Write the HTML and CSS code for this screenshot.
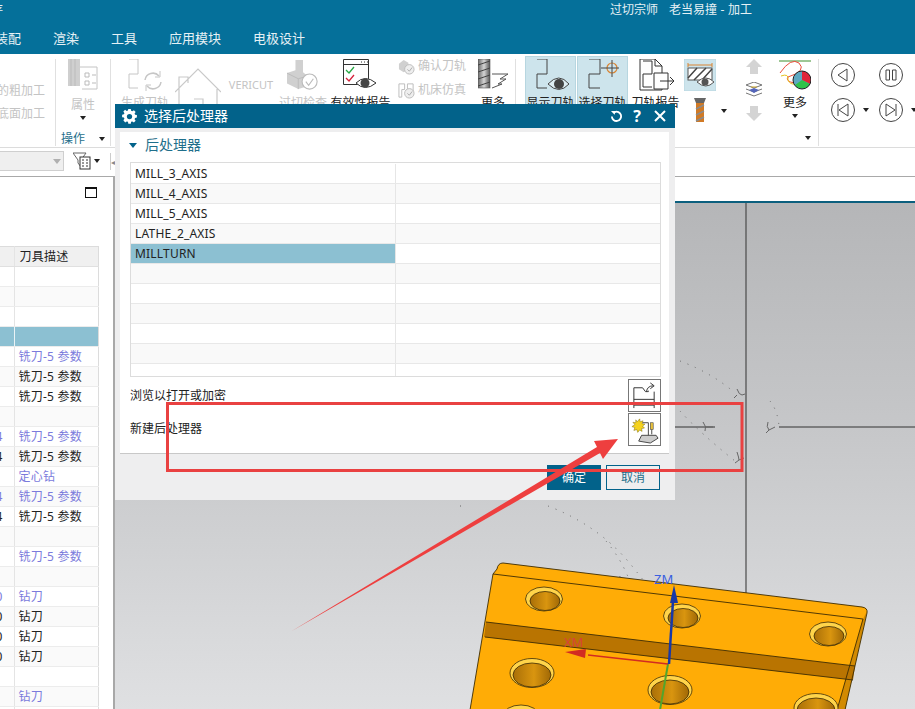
FILE: index.html
```html
<!DOCTYPE html>
<html lang="zh">
<head>
<meta charset="utf-8">
<title>选择后处理器</title>
<link rel="stylesheet" href="styles.css">
</head>
<body>
<div class="app">
  <header class="top">
    <div class="titlerow"><span class="cutword">存</span><span class="apptitle">过切宗师&nbsp;&nbsp;&nbsp;老当易撞 - 加工</span></div>
    <nav class="menu"><span class="m1">装配</span><span class="m2">渲染</span><span class="m3">工具</span><span class="m4">应用模块</span><span class="m5">电极设计</span></nav>
  </header>

  <section class="ribbon">
    <div class="g1">
      <span class="off">的粗加工</span>
      <span class="off">底面加工</span>
    </div>
    <div class="g2">
      <svg class="i32" viewBox="0 0 32 32"><rect x="1" y="0" width="12" height="27" fill="#cfcfcf"/><path d="M4 0v27M8 0v27" stroke="#bbb"/><path d="M13 8h17v22H15" fill="#fff" stroke="#c4c4c4"/><path d="M18 14h4v4h-4zM18 22h4v4h-4zM25 16h4M25 24h4" fill="none" stroke="#bbb"/></svg>
      <span class="lab off">属性</span>
      <i class="caret c-mid"></i>
      <div class="grouplab"><span>操作</span><i class="caret"></i></div>
    </div>
    <div class="g3">
      <div class="tool">
        <svg class="i44" viewBox="0 0 44 32"><path d="M6 0h9v15H6v14h9" fill="none" stroke="#c6c6c6"/><path d="M22 21a8 8 0 0 1 14-4M38 23a8 8 0 0 1-14 4" fill="none" stroke="#c6c6c6" stroke-width="1.5"/><path d="M37 12v6h-5M23 32v-6h5" fill="none" stroke="#c6c6c6"/></svg>
        <span class="lab off">生成刀轨</span>
      </div>
      <div class="tool">
        <svg class="i46" viewBox="0 0 46 40"><path d="M4 24V10h9v6M0 25 23 2l23 23M4 22v18M42 22v18M19 32h9v8" fill="none" stroke="#c9c9c9" stroke-width="1.2"/></svg>
      </div>
      <div class="tool vericut off">VERICUT</div>
      <div class="tool">
        <svg class="i32" viewBox="0 0 34 32"><path d="M9 0h8v13l5 4v11l-10 3-12-6V14l9-3z" fill="#d0d0d0"/><path d="M0 14l12 6 10-3M12 20v11" fill="none" stroke="#bbb"/><circle cx="24" cy="23" r="8" fill="#fff" stroke="#bbb" stroke-width="1.2"/><path d="M20 23l3 4 5-7" fill="none" stroke="#bbb" stroke-width="1.2"/></svg>
        <span class="lab off">过切检查</span>
      </div>
      <div class="tool">
        <svg class="i36" viewBox="0 0 36 32"><path d="M.5.5h25v25H.5zM.5 5.500h25" fill="#fff" stroke="#333"/><path d="M18 3h1M21 3h1M24 3h1" stroke="#333"/><path d="M3 11l3 3 5-6" fill="none" stroke="#27a844" stroke-width="1.300"/><path d="M3 19l3 3 5-6" fill="none" stroke="#d5213a" stroke-width="1.300"/><path d="M13 24q9-9 20 0-11 9-20 0z" fill="#fff" stroke="#333"/><circle cx="22" cy="24" r="4.500" fill="#444"/></svg>
        <span class="lab">有效性报告</span>
      </div>
      <div class="tool smallcol">
        <div class="smallrow">
          <svg class="i17" viewBox="0 0 18 18"><path d="M1 6l5-4 5 3v7l-5 3-5-3z" fill="#d0d0d0"/><circle cx="12" cy="12" r="5" fill="#eee" stroke="#bbb"/><path d="M10 12l2 2 3-4" fill="none" stroke="#aaa"/></svg>
          <span class="off">确认刀轨</span>
        </div>
        <div class="smallrow">
          <svg class="i17" viewBox="0 0 18 18"><path d="M1 2h6v6H4v8H1zM10 2h6v8h-6z" fill="none" stroke="#bbb"/><circle cx="12" cy="12" r="5" fill="#eee" stroke="#bbb"/><path d="M10 12l2 2 3-4" fill="none" stroke="#aaa"/></svg>
          <span class="off">机床仿真</span>
        </div>
      </div>
      <div class="tool more1">
        <svg class="i32" viewBox="0 0 32 32"><defs><linearGradient id="drillg" x1="0" x2="1"><stop offset="0" stop-color="#666"/><stop offset=".5" stop-color="#d5d5d5"/><stop offset="1" stop-color="#555"/></linearGradient></defs><rect x="0" y="0" width="12" height="29" fill="url(#drillg)" stroke="#555" stroke-width=".6"/><path d="M0 6l12-4M0 13l12-4M0 20l12-4M0 27l12-4" stroke="#444"/><path d="M14 15h16l-8 5h6l-8 5h4l-10 4" fill="#fff" stroke="#555"/></svg>
        <span class="lab">更多</span>
      </div>
    </div>
    <div class="g4">
      <div class="tool hl t51">
        <svg class="i44" viewBox="0 0 44 32"><path d="M8 0h10v15H8v14h10" fill="none" stroke="#444"/><path d="M19 25q11-12 21 0-10 11-21 0z" fill="#dfeef3" stroke="#444"/><circle cx="30" cy="25" r="5" fill="#444"/></svg>
        <span class="lab">显示刀轨</span>
      </div>
      <div class="tool hl t51">
        <svg class="i44" viewBox="0 0 44 32"><path d="M8 0h11v15H8v14h11" fill="none" stroke="#444"/><circle cx="31" cy="9" r="5" fill="none" stroke="#d98432" stroke-width="1.200"/><path d="M20 9h18M31 1v17" fill="none" stroke="#444"/></svg>
        <span class="lab">选择刀轨</span>
      </div>
      <div class="tool t45">
        <svg class="i36" viewBox="0 0 36 32"><path d="M2 0h15l7 7v24H2z" fill="#fff" stroke="#333"/><path d="M5 2h9v13H5v13h9M17 0v7h7" fill="none" stroke="#333"/><path d="M16 14h14v16H16z" fill="#fff" stroke="#333"/><path d="M22 22h14M32 18l4 4-4 4" fill="none" stroke="#333"/></svg>
        <span class="lab">刀轨报告</span>
      </div>
    </div>
    <div class="g5">
      <div class="col-a">
        <svg class="tile" viewBox="0 0 32 32"><rect width="32" height="32" fill="#cde4ec" stroke="#b7d6e0"/><path d="M4 6h24M4 4v4M28 4v4" stroke="#d98432" fill="none"/><rect x="4" y="9" width="24" height="12" fill="#fff" stroke="#555"/><path d="M4 19l9-10M10 21 22 9M18 21l10-11" stroke="#444" stroke-width="1.500"/><path d="M13 23q9-8 17 0-8 8-17 0z" fill="#fff" stroke="#555"/><circle cx="21" cy="23" r="3.500" fill="#555"/></svg>
        <div class="toolrow">
          <svg class="mill" viewBox="0 0 12 25"><path d="M0 0h12l-2 5H2z" fill="#666"/><rect x="2" y="5" width="8" height="19" fill="#d17a25"/><path d="M2 11l8-4M2 17l8-4M2 23l8-4" stroke="#8b8b8b" stroke-width="1.500"/></svg>
          <i class="caret c-a"></i>
        </div>
      </div>
      <div class="col-b">
        <svg class="i18" viewBox="0 0 18 16"><path d="M9 0l8 8h-4v7H5V8H1z" fill="#d4d4d4"/></svg>
        <svg class="i18" viewBox="0 0 18 16"><path d="M9 0l8 3-8 3-8-3zM1 7l8 3 8-3M1 11l8 3 8-3" fill="none" stroke="#777"/><path d="M4 8l5 3 5-3-5-2z" fill="#5566bb"/><path d="M6 5h6" stroke="#c9a32a"/></svg>
        <svg class="i18" viewBox="0 0 18 16"><path d="M9 16l8-8h-4V1H5v7H1z" fill="#d4d4d4"/></svg>
      </div>
      <div class="col-c">
        <svg class="i32" viewBox="0 0 32 32"><path d="M0 2h32" stroke="#3c8f2d"/><path d="M1 14Q12-2 20 4 28 12 9 18q-3 4 6 6" fill="none" stroke="#ea4d3d"/><path d="M2 17q8-3 7 4 2 5 8 4" fill="none" stroke="#e7c21f"/><circle cx="23" cy="21" r="9" fill="#5ea8c1"/><path d="M23 21V12a9 9 0 0 1 8 13z" fill="#e0253a"/><path d="M23 21l8 4a9 9 0 0 1-15 1z" fill="#30c24a"/><circle cx="23" cy="21" r="9" fill="none" stroke="#222"/></svg>
        <span class="lab">更多</span>
        <i class="caret c-mid"></i>
        <div class="c-end"><i class="caret"></i></div>
      </div>
    </div>
    <div class="g6">
      <svg class="media" viewBox="0 0 24 24"><circle cx="12" cy="12" r="11.500" fill="none" stroke="#444"/><path d="M16 6v12L7 12z" fill="none" stroke="#444"/></svg>
      <svg class="media" viewBox="0 0 24 24"><circle cx="12" cy="12" r="11.500" fill="none" stroke="#444"/><path d="M7 7h3.500v10H7zM13.500 7H17v10h-3.500z" fill="none" stroke="#444"/></svg>
      <span class="mediawrap"><svg class="media" viewBox="0 0 24 24"><circle cx="12" cy="12" r="11.500" fill="none" stroke="#444"/><path d="M7 6v12M17 6v12L8 12z" fill="none" stroke="#444"/></svg><i class="caret"></i></span>
      <span class="mediawrap"><svg class="media" viewBox="0 0 24 24"><circle cx="12" cy="12" r="11.500" fill="none" stroke="#444"/><path d="M17 6v12M7 6v12l9-6z" fill="none" stroke="#444"/></svg><i class="caret"></i></span>
    </div>
  </section>

  <section class="filterbar">
    <div class="combo"><i class="caret gray"></i></div>
    <svg class="filter" viewBox="0 0 18 18"><path d="M0 1h13L8 8v7L5 11V8z" fill="#fff" stroke="#666"/><rect x="7" y="5" width="10" height="12" fill="#fff" stroke="#333"/><path d="M9 8h2M13 8h2M9 11h2M13 11h2M9 14h2M13 14h2" stroke="#333"/></svg>
    <i class="caret"></i>
    <span class="collapse">◂</span>
  </section>

  <main class="main">
    <aside class="navpanel">
      <div class="navtop"><span class="maxbtn"></span></div>
      <table class="navtable">
        <thead><tr><th></th><th>刀具描述</th></tr></thead>
        <tbody>
          <tr><td></td><td></td></tr>
          <tr><td></td><td></td></tr>
          <tr><td></td><td></td></tr>
          <tr class="sel"><td></td><td></td></tr>
          <tr class="blue"><td></td><td>铣刀-5 参数</td></tr>
          <tr><td></td><td>铣刀-5 参数</td></tr>
          <tr><td></td><td>铣刀-5 参数</td></tr>
          <tr><td></td><td></td></tr>
          <tr class="blue"><td>4</td><td>铣刀-5 参数</td></tr>
          <tr><td>4</td><td>铣刀-5 参数</td></tr>
          <tr class="blue"><td></td><td>定心钻</td></tr>
          <tr class="blue"><td>4</td><td>铣刀-5 参数</td></tr>
          <tr><td>4</td><td>铣刀-5 参数</td></tr>
          <tr><td></td><td></td></tr>
          <tr class="blue"><td></td><td>铣刀-5 参数</td></tr>
          <tr><td></td><td></td></tr>
          <tr class="blue"><td>0</td><td>钻刀</td></tr>
          <tr><td>0</td><td>钻刀</td></tr>
          <tr><td>0</td><td>钻刀</td></tr>
          <tr><td>0</td><td>钻刀</td></tr>
          <tr><td></td><td></td></tr>
          <tr class="blue"><td></td><td>钻刀</td></tr>
          <tr><td></td><td></td></tr>
        </tbody>
      </table>
    </aside>
    <div class="work">
      <div class="strip"></div>
      <div class="viewport">
        <svg class="scene" viewBox="115 202 800 507" preserveAspectRatio="none">
          <defs>
            <linearGradient id="bore" x1="0" x2="1"><stop offset="0" stop-color="#a96f08"/><stop offset=".55" stop-color="#d9950f"/><stop offset="1" stop-color="#a06806"/></linearGradient>
          </defs>
          <path d="M746 202V709" stroke="#4a4a4a" stroke-width="1.200"/>
          <path d="M675 426H715M779 426H915" stroke="#333"/>
          <path d="M680 360Q712 372 735 392M680 410Q700 432 735 460M770 400q8 10 9 26M548 505Q600 525 632 565T660 600M606 540Q640 580 640 640M620 575q-8 40 0 70M510 497h1M460 505h1" fill="none" stroke="#666" stroke-dasharray="1 7"/>
          <path d="M737 388q2 6 5 6l3-1M737 394l-3 3M703 421q4 5 2 9M705 426h8M768 421q-2 5 1 8l6-3M769 429l-3 3M737 451q2 6 2 8l5-2M739 459l-4 3" fill="none" stroke="#666"/>

          <path d="M503 562Q498 562 497 568L493 573 470 709H845L867 612Q868 607 863 606Z" fill="#ffac06"/>
          <path d="M863 618l4-8-22 99h-8z" fill="#d28a02"/>
          <path d="M486 621 855 665 853 679 484 636Z" fill="#b97401"/>
          <path d="M503 562Q498 562 497 568L493 573M503 562 862 606Q868 607 867 612L845 709M493 573 863 618 837 709M493 573 470 709M486 621 855 665M485 636 853 679" fill="none" stroke="#3d2c05" stroke-width=".9"/>
          <g>
            <ellipse cx="544" cy="598" rx="18.500" ry="12" fill="#ffd44a" stroke="#3d2c05" stroke-width=".8"/><ellipse cx="545" cy="600" rx="15" ry="9.500" fill="url(#bore)" stroke="#3d2c05" stroke-width=".8"/>
            <ellipse cx="682" cy="615" rx="18.500" ry="12" fill="#ffd44a" stroke="#3d2c05" stroke-width=".8"/><ellipse cx="683" cy="617" rx="15" ry="9.500" fill="url(#bore)" stroke="#3d2c05" stroke-width=".8"/>
            <ellipse cx="828" cy="633" rx="18.500" ry="12" fill="#ffd44a" stroke="#3d2c05" stroke-width=".8"/><ellipse cx="829" cy="635" rx="15" ry="9.500" fill="url(#bore)" stroke="#3d2c05" stroke-width=".8"/>
            <ellipse cx="532" cy="672" rx="22" ry="14.500" fill="#ffd44a" stroke="#3d2c05" stroke-width=".8"/><ellipse cx="532" cy="674" rx="19" ry="12" fill="url(#bore)" stroke="#3d2c05" stroke-width=".8"/>
            <ellipse cx="670" cy="689" rx="22" ry="14.500" fill="#ffd44a" stroke="#3d2c05" stroke-width=".8"/><ellipse cx="670" cy="691" rx="19" ry="12" fill="url(#bore)" stroke="#3d2c05" stroke-width=".8"/>
            <ellipse cx="816" cy="707" rx="22" ry="14.500" fill="#ffd44a" stroke="#3d2c05" stroke-width=".8"/><ellipse cx="816" cy="709" rx="19" ry="12" fill="url(#bore)" stroke="#3d2c05" stroke-width=".8"/>
            <ellipse cx="521" cy="715" rx="18" ry="11" fill="#ffd44a" stroke="#3d2c05" stroke-width=".8"/>
          </g>
          <path d="M668 663 660 709" stroke="#52a52c" stroke-width="2"/>
          <path d="M668 663 588 654" stroke="#d22b22" stroke-width="1.500"/>
          <path d="M565 651 586 648 585 657Z" fill="#d22b22"/>
          <path d="M669 663 673 600" stroke="#1738a8" stroke-width="2.500"/>
          <path d="M674 584 678 602H670Z" fill="#1738a8"/>
          <text x="654" y="583" class="axis zm">ZM</text>
          <text x="564" y="646" class="axis xm">XM</text>
        </svg>
      </div>
    </div>
  </main>

  <section class="dialog">
    <div class="dlgtitle">
      <svg class="gear" viewBox="0 0 16 16"><path d="M6.500 0h3l.4 2.200 1.500.6 1.900-1.300 2.100 2.100-1.300 1.900.6 1.500 2.200.4v3l-2.200.4-.6 1.500 1.300 1.900-2.100 2.100-1.900-1.300-1.500.6-.4 2.200h-3l-.4-2.200-1.500-.6-1.900 1.300L.5 13.700l1.300-1.900-.6-1.500L-1 9.900v-3l2.200-.4.600-1.500L.5 3.100 2.600 1l1.900 1.300L6 1.700z" transform="translate(1 0) scale(.88)" fill="#fff"/><circle cx="8" cy="8" r="2.800" fill="#02628a"/></svg>
      <span class="dlgname">选择后处理器</span>
      <svg class="reset" viewBox="0 0 14 14"><path d="M5 2.200A5 5 0 1 1 2 7" fill="none" stroke="#fff" stroke-width="2"/><path d="M1 1l5 0-1 4z" fill="#fff"/></svg>
      <span class="help">?</span>
      <svg class="close" viewBox="0 0 12 12"><path d="M1 1l10 10M11 1 1 11" stroke="#fff" stroke-width="2"/></svg>
    </div>
    <div class="panel">
      <div class="sechead"><i class="tri"></i><span>后处理器</span></div>
      <div class="plist">
        <div class="prow"><span>MILL_3_AXIS</span><span></span></div>
        <div class="prow"><span>MILL_4_AXIS</span><span></span></div>
        <div class="prow"><span>MILL_5_AXIS</span><span></span></div>
        <div class="prow"><span>LATHE_2_AXIS</span><span></span></div>
        <div class="prow picked"><span>MILLTURN</span><span></span></div>
        <div class="prow"><span></span><span></span></div>
        <div class="prow"><span></span><span></span></div>
        <div class="prow"><span></span><span></span></div>
        <div class="prow"><span></span><span></span></div>
        <div class="prow"><span></span><span></span></div>
        <div class="prow lastrow"><span></span><span></span></div>
      </div>
      <div class="action act1">
        <span>浏览以打开或加密</span>
        <span class="iconbtn"><svg viewBox="0 0 30 30"><path d="M4 9h9l3 4h3v-1M4 9v21M25 13v17M4 21h21M4 27h21" fill="none" stroke="#333" transform="translate(0 -2)"/><path d="M17 11q1-6 7-6M21 2l4 3-4 3" fill="none" stroke="#333"/></svg></span>
      </div>
      <div class="action act2">
        <span>新建后处理器</span>
        <span class="iconbtn"><svg viewBox="0 0 30 30"><path d="M6 5l1.500 2L10 4l.5 3 3-1-1 3 3 .5-2.500 2 2 2-3 .5.500 3-2.500-1.500L8 18l-1-3-3 1 1-3-3-1 3-2-2-2.500 3 .5z" fill="#f5d21c" stroke="#7a6a10" stroke-width=".5"/><path d="M13 8h6v14" fill="none" stroke="#444"/><rect x="21" y="8" width="3" height="7" fill="#e8c13c" stroke="#444" stroke-width=".6"/><path d="M22.500 15v5" stroke="#444"/><path d="M12 21h15l2 3-8 5-12-2z" fill="#ccc" stroke="#444"/></svg></span>
      </div>
    </div>
    <div class="dlgfoot"><span class="btn primary">确定</span><span class="btn">取消</span></div>
  </section>

  <svg class="notes" viewBox="0 0 915 709">
    <rect x="167.500" y="403.500" width="574.500" height="67" fill="none" stroke="#e94141" stroke-width="3"/>
    <path d="M291 631.500 597 447 594 441 618 439 603 459 600 453Z" fill="#ee3f3f"/>
  </svg>
</div>
</body>
</html>
```

FILE: styles.css
```css
* { box-sizing: border-box; }
html, body { margin: 0; padding: 0; }
body {
  width: 915px;
  height: 709px;
  overflow: hidden;
  background: #fff;
  font: 12px/16px "Noto Sans", "Noto Sans CJK SC", sans-serif;
  color: #222;
}
svg { display: block; flex: none; }
i { font-style: normal; }

.app {
  position: relative;
  width: 915px;
  height: 709px;
  overflow: hidden;
  display: flex;
  flex-direction: column;
}

/* header */
.top {
  height: 54px;
  background: #05709a;
  color: #e6f1f5;
  flex: none;
}
.titlerow {
  height: 22px;
  display: flex;
  justify-content: space-between;
  padding-right: 163px;
  line-height: 20px;
}
.cutword { margin-left: -9px; }
.apptitle { white-space: pre; word-spacing: .5px; }
.menu {
  display: flex;
  height: 32px;
  align-items: center;
  font-size: 13px;
  line-height: 34px;
}
.m1 { margin-left: -5px; width: 58px; }
.m2 { width: 58px; }
.m3 { width: 58px; }
.m4 { width: 84px; }

/* ribbon */
.ribbon {
  height: 94px;
  flex: none;
  display: flex;
  background: #fff;
  border-bottom: 1px solid #dcdcdc;
  padding-top: 2px;
  font-size: 12px;
  overflow: hidden;
}
.ribbon > div { flex: none; }
.off { color: #c4c4c4; }
.caret {
  display: inline-block;
  width: 0;
  height: 0;
  border-left: 3.5px solid transparent;
  border-right: 3.500px solid transparent;
  border-top: 4px solid #222;
}
.caret.gray { border-top-color: #b0b0b0; border-left-width: 4.500px; border-right-width: 4.500px; border-top-width: 5px; }
.g1, .g2, .g3 { border-right: 1px solid #e0e0e0; height: 87px; margin-top: 3px; }
.g1 {
  width: 56px;
  display: flex;
  flex-direction: column;
  align-items: flex-end;
  padding: 24px 10px 0 0;
  gap: 7px;
  overflow: hidden;
  white-space: nowrap;
}
.g2 {
  width: 55px;
  display: flex;
  flex-direction: column;
  align-items: center;
}
.lab { line-height: 16px; white-space: nowrap; margin-top: 4px; display: block; }
.c-mid { margin-top: 3px; }
.grouplab {
  display: flex;
  align-items: center;
  gap: 14px;
  color: #1f6f8b;
  margin-top: 11px;
  height: 18px;
}
.g2 .lab { margin-top: 6px; }
.g3 {
  width: 405px;
  display: grid;
  grid-template-columns: 44px 46px 44px 44px 55px 64px 32px;
  column-gap: 8px;
  padding-left: 12px;
  align-content: start;
}
.tool { display: flex; flex-direction: column; align-items: center; }
.i32 { width: 32px; height: 32px; }
.i36 { width: 36px; height: 32px; }
.i44 { width: 44px; height: 32px; }
.i46 { width: 46px; height: 40px; margin-top: 8px; }
.i17 { width: 17px; height: 17px; }
.i18 { width: 18px; height: 16px; }
.vericut { font-size: 11px; line-height: 16px; margin-top: 18px; white-space: nowrap; }
.smallcol { align-items: flex-start; padding: 0 0 0 2px; margin-top: -5px; }
.smallrow { display: flex; align-items: center; gap: 3px; height: 24px; white-space: nowrap; }
.more1 { margin-left: 10px; align-items: flex-start; }
.more1 .lab { margin-left: 3px; }

.g4 { display: flex; padding-left: 9px; width: 162px; }
.t51 { width: 51px; margin-right: 1px; }
.t45 { width: 45px; margin-left: 4px; margin-top: 3px; }
.hl {
  background: #cde4ec;
  border: 1px solid #b7d6e0;
  height: 90px;
  padding-top: 2px;
}

.g5 { display: flex; width: 141px; height: 87px; margin-top: 3px; border-right: 1px solid #e0e0e0; }
.col-a { width: 67px; padding-left: 6px; }
.tile { width: 32px; height: 32px; }
.toolrow { display: flex; align-items: center; gap: 15px; padding-left: 10px; margin-top: 7px; }
.mill { width: 12px; height: 25px; }
.col-b { width: 18px; display: flex; flex-direction: column; gap: 7px; }
.col-c { width: 32px; margin-left: 16px; display: flex; flex-direction: column; align-items: center; }
.col-c .lab { margin-top: 4px; }
.c-end { width: 32px; text-align: right; margin-top: 14px; height: 8px; line-height: 8px; }

.g6 {
  width: 110px;
  display: grid;
  grid-template-columns: 48px 48px;
  row-gap: 11px;
  padding: 7px 0 0 12px;
  align-content: start;
}
.media { width: 24px; height: 24px; }
.mediawrap { display: flex; align-items: center; gap: 8px; width: 48px; }

/* filter bar */
.filterbar {
  height: 29px;
  flex: none;
  background: #fff;
  border-bottom: 1px solid #a9a9a9;
  display: flex;
  align-items: center;
  padding-bottom: 2px;
}
.combo {
  width: 64px;
  height: 20px;
  background: #efefef;
  border: 1px solid #cfcfcf;
  border-left: 0;
  display: flex;
  align-items: center;
  justify-content: flex-end;
  padding-right: 2px;
}
.filter { width: 18px; height: 18px; margin-left: 9px; }
.filterbar .caret { margin-left: 3px; }
.combo .caret { margin-left: 0; }
.collapse {
  margin-left: 10px;
  font-size: 8px;
  width: 10px;
  height: 17px;
  line-height: 17px;
  color: #888;
  border-left: 1px solid #ccc;
}

/* main */
.main { flex: 1; display: flex; min-height: 0; }
.navpanel {
  width: 115px;
  flex: none;
  background: #fff;
  border-right: 2px solid #a8a8a8;
  overflow: hidden;
}
.navtop { height: 69px; padding: 10px 16px 0 0; display: flex; justify-content: flex-end; }
.maxbtn {
  width: 12px;
  height: 11px;
  border: 1px solid #111;
  border-top-width: 2px;
}
.navtable {
  width: 99px;
  table-layout: fixed;
  border-collapse: collapse;
  border-top: 1px solid #dcdcdc;
  border-right: 1px solid #dcdcdc;
  font-size: 12px;
  letter-spacing: .25px;
}
.navtable th:first-child, .navtable td:first-child {
  width: 14px;
  border-right: 1px solid #e4e4e4;
  text-align: right;
  padding: 0 11px 0 0;
  overflow: hidden;
  direction: rtl;
}
.navtable th {
  height: 20px;
  background: #f0f0f0;
  font-weight: 400;
  text-align: left;
  padding: 0 0 0 5px;
  border-bottom: 1px solid #e0e0e0;
}
.navtable td {
  height: 20px;
  padding: 0 0 0 4px;
  border-bottom: 1px solid #ececec;
  white-space: nowrap;
}
.navtable tbody tr:nth-child(even) td { background: #fafafa; }
.navtable tbody tr.sel td { background: #8cc0d2; border-right-color: #eaf3f6; }
.navtable .blue td { color: #7b7bdc; }

.work { flex: 1; display: flex; flex-direction: column; min-width: 0; }
.strip { height: 26px; background: #fff; border-bottom: 2px solid #0b5f7e; flex: none; }
.viewport {
  flex: 1;
  min-height: 0;
  background: linear-gradient(#b5b6b8, #c4c5c7 40%, #dfe0e2);
  overflow: hidden;
}
.scene { width: 800px; height: 507px; }
.axis { font: 13px "Noto Sans", sans-serif; }
.zm { fill: #3a5fe0; }
.xm { fill: #d9433a; }

/* dialog */
.dialog {
  position: absolute;
  left: 115px;
  top: 104px;
  width: 560px;
  height: 396px;
  background: #eeeeef;
  display: flex;
  flex-direction: column;
}
.dlgtitle {
  height: 24px;
  flex: none;
  background: #02628a;
  color: #fff;
  display: flex;
  align-items: center;
  padding-left: 7px;
}
.gear { width: 15px; height: 15px; }
.dlgname { font-size: 14px; margin-left: 7px; flex: 1; }
.reset { width: 13px; height: 13px; }
.help { width: 14px; margin-left: 7px; font: 700 16px/24px "Noto Sans", sans-serif; text-align: center; }
.close { width: 12px; height: 12px; margin: 0 9px 0 10px; }

.panel {
  margin: 4px 6px 0 5px;
  height: 322px;
  background: #fff;
  border-bottom: 1px solid #c8c8c8;
  padding: 5px 8px 0 10px;
  flex: none;
}
.sechead {
  display: flex;
  align-items: center;
  height: 16px;
  gap: 8px;
  color: #1f6f8b;
  font-size: 14px;
  margin-left: -1px;
}
.tri {
  width: 0;
  height: 0;
  border-left: 4.500px solid transparent;
  border-right: 4.500px solid transparent;
  border-top: 5px solid #02628a;
}
.plist {
  margin-top: 9px;
  height: 215px;
  border: 1px solid #dcdcdc;
  padding-top: 1px;
  overflow: hidden;
  letter-spacing: .2px;
}
.prow {
  display: grid;
  grid-template-columns: 265px 1fr;
  height: 20px;
  border-bottom: 1px solid #e8e8e8;
  line-height: 19px;
}
.prow:nth-child(even) { background: #f9f9f9; }
.prow span { padding-left: 4px; }
.prow span:first-child { border-right: 1px solid #e6e6e6; }
.prow.picked { background: #fff; }
.prow.picked span:first-child { background: #8cc0d2; }
.lastrow { border-bottom: 0; }
.action { display: flex; align-items: center; justify-content: space-between; height: 32px; }
.act1 { margin-top: 2px; }
.act2 { margin-top: 2px; }
.act1 > span:first-child { margin-top: 1px; }
.iconbtn {
  width: 33px;
  height: 33px;
  background: #fff;
  border: 1px solid #777;
  padding: 1px;
}
.dlgfoot {
  display: flex;
  justify-content: flex-end;
  gap: 5px;
  padding: 11px 15px 0 0;
}
.btn {
  width: 54px;
  height: 25px;
  border: 1px solid #02628a;
  color: #1f6f8b;
  text-align: center;
  line-height: 24px;
}
.btn.primary { background: #02628a; color: #fff; }

.notes {
  position: absolute;
  left: 0;
  top: 0;
  width: 915px;
  height: 709px;
  pointer-events: none;
}
```
